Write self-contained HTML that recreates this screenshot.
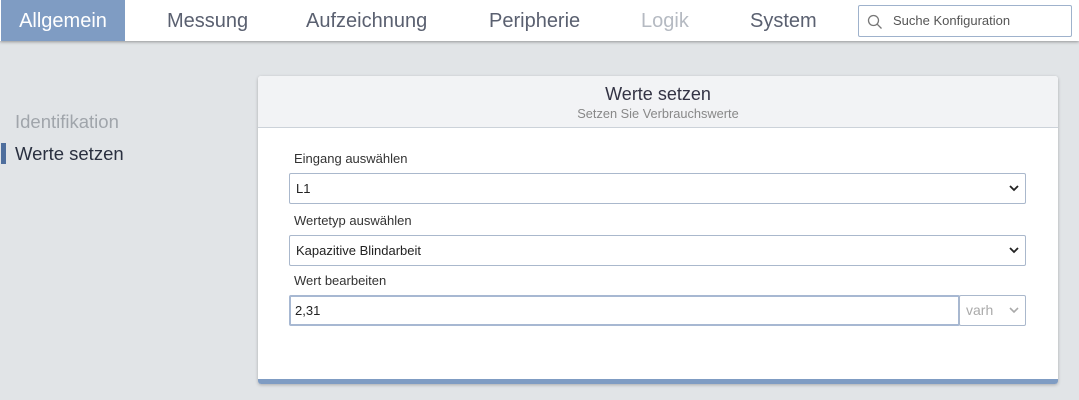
<!DOCTYPE html>
<html><head><style>
*{box-sizing:border-box;margin:0;padding:0}
body{width:1079px;height:400px;background:#e1e4e7;font-family:"Liberation Sans",sans-serif;position:relative;overflow:hidden;color:#333}
.nav{position:absolute;left:0;top:0;width:1079px;height:41px;background:#fff;box-shadow:0 1px 3px rgba(0,0,0,.35)}
.tab{position:absolute;top:0;height:41px;line-height:42px;font-size:20px;color:#5a6070;font-weight:300}
.act{left:1px;width:124px;background:#7f9cc3;color:#fff;text-align:center}
.search{position:absolute;left:858px;top:5px;width:214px;height:32px;border:1px solid #9fb2cc;border-radius:2px;font-size:13px;color:#555;line-height:30px;padding-left:34px}
.side{position:absolute;left:15px;font-size:18.5px}
.card{position:absolute;left:258px;top:76px;width:800px;height:308px;background:#fff;border-radius:3px;box-shadow:0 1px 3px rgba(0,0,0,.25);overflow:hidden}
.hd{height:52px;background:#f2f3f5;border-bottom:1px solid #ccd2d9;text-align:center}
.hd .t{font-size:18px;color:#334;padding-top:8px}
.hd .s{font-size:12.8px;color:#888;margin-top:1px}
.bar{position:absolute;left:0;bottom:0;width:800px;height:5px;background:#7f9cc3}
.lbl{position:absolute;left:36px;font-size:13px;color:#333}
.sel{position:absolute;left:31px;width:737px;height:31px;border:1px solid #aab8cc;border-radius:2px;font-size:13px;line-height:29px;padding-left:6px;color:#222}
.chev{position:absolute;right:6px;top:10px}
</style></head><body>
<div class="nav">
<div class="tab act">Allgemein</div>
<div class="tab" style="left:167px">Messung</div>
<div class="tab" style="left:306px">Aufzeichnung</div>
<div class="tab" style="left:489px">Peripherie</div>
<div class="tab" style="left:641px;color:#b5bac2">Logik</div>
<div class="tab" style="left:750px">System</div>
<div class="search"><svg style="position:absolute;left:8px;top:8px" width="16" height="16" viewBox="0 0 16 16"><circle cx="6.5" cy="6.5" r="5" fill="none" stroke="#777" stroke-width="1.3"/><path d="M10.2 10.2L14.5 14.5" stroke="#777" stroke-width="1.3"/></svg>Suche Konfiguration</div>
</div>
<div class="side" style="top:111px;color:#a0a5ab">Identifikation</div>
<div style="position:absolute;left:1px;top:143px;width:5px;height:21px;background:#4e6e9d"></div>
<div class="side" style="top:143px;color:#2a3040">Werte setzen</div>
<div class="card">
<div class="hd"><div class="t">Werte setzen</div><div class="s">Setzen Sie Verbrauchswerte</div></div>
<div class="lbl" style="top:75px">Eingang auswählen</div>
<div class="sel" style="top:97px">L1<svg class="chev" width="10" height="8" viewBox="0 0 10 8"><path d="M1 2l4 4 4-4" fill="none" stroke="#222" stroke-width="1.8"/></svg></div>
<div class="lbl" style="top:137px">Wertetyp auswählen</div>
<div class="sel" style="top:159px">Kapazitive Blindarbeit<svg class="chev" width="10" height="8" viewBox="0 0 10 8"><path d="M1 2l4 4 4-4" fill="none" stroke="#222" stroke-width="1.8"/></svg></div>
<div class="lbl" style="top:197px">Wert bearbeiten</div>
<div class="sel" style="top:219px;width:671px;border:2px solid #a7b8d2;line-height:27px;padding-left:4px">2,31</div>
<div class="sel" style="top:219px;left:701px;width:67px;color:#aaa;font-size:14px">varh<svg class="chev" width="10" height="8" viewBox="0 0 10 8"><path d="M1 2l4 4 4-4" fill="none" stroke="#aaa" stroke-width="1.6"/></svg></div>
<div class="bar"></div>
</div>
</body></html>
